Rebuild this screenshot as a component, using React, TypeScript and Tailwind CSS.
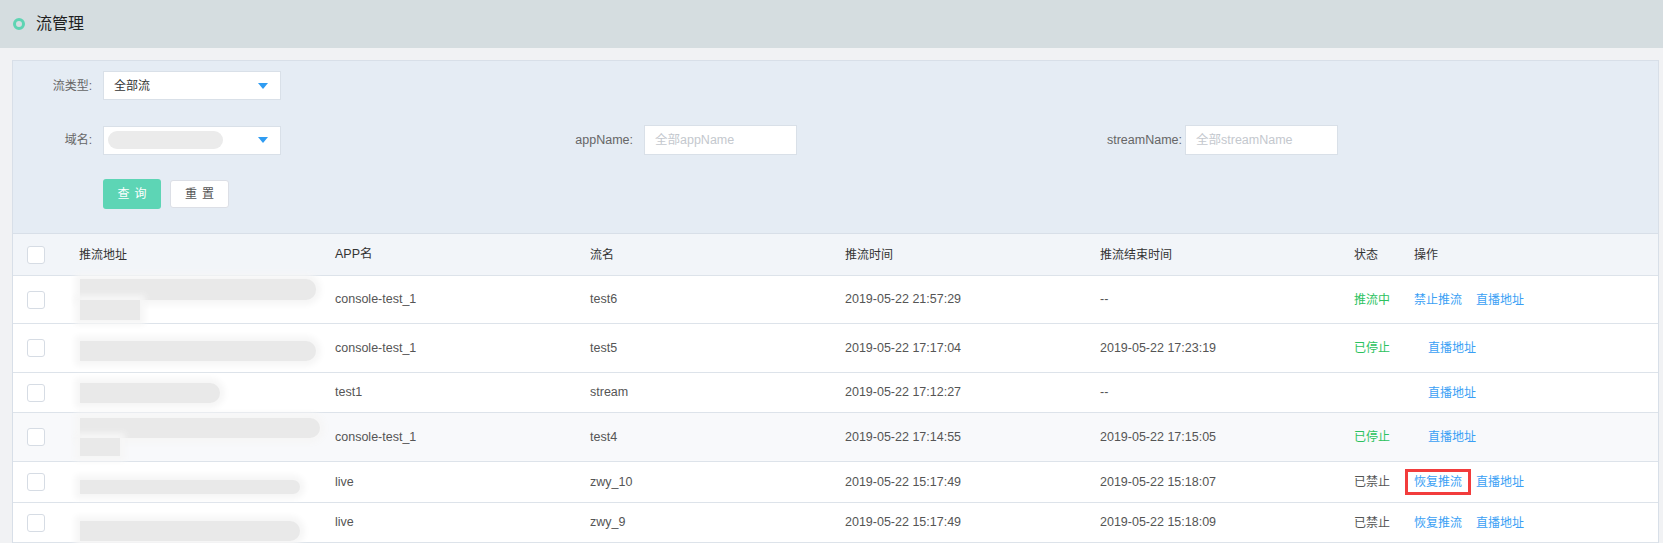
import React from 'react';

type Bar = { w: number; h: number };
type Row = {
  h: string;
  bars: Bar[];
  barsOffset?: string;
  app: string;
  stream: string;
  start: string;
  end: string;
  status: '推流中' | '已停止' | '已禁止' | '';
  action?: '禁止推流' | '恢复推流';
  marked?: boolean;
  hover?: boolean;
};

const rows: Row[] = [
  { h: 'h-[48px]', bars: [{ w: 236, h: 21 }, { w: 60, h: 20 }], app: 'console-test_1', stream: 'test6', start: '2019-05-22 21:57:29', end: '--', status: '推流中', action: '禁止推流' },
  { h: 'h-[49px]', bars: [{ w: 236, h: 20 }], barsOffset: 'mt-[5px]', app: 'console-test_1', stream: 'test5', start: '2019-05-22 17:17:04', end: '2019-05-22 17:23:19', status: '已停止' },
  { h: 'h-[40px]', bars: [{ w: 140, h: 20 }], app: 'test1', stream: 'stream', start: '2019-05-22 17:12:27', end: '--', status: '' },
  { h: 'h-[49px]', bars: [{ w: 240, h: 20 }, { w: 40, h: 18 }], app: 'console-test_1', stream: 'test4', start: '2019-05-22 17:14:55', end: '2019-05-22 17:15:05', status: '已停止', hover: true },
  { h: 'h-[41px]', bars: [{ w: 220, h: 14 }], barsOffset: 'mt-[10px]', app: 'live', stream: 'zwy_10', start: '2019-05-22 15:17:49', end: '2019-05-22 15:18:07', status: '已禁止', action: '恢复推流', marked: true },
  { h: 'h-[40px]', bars: [{ w: 220, h: 20 }], barsOffset: 'mt-[16px]', app: 'live', stream: 'zwy_9', start: '2019-05-22 15:17:49', end: '2019-05-22 15:18:09', status: '已禁止', action: '恢复推流' },
];

const cols = 'grid grid-cols-[54px_256px_255px_255px_255px_254px_60px_1fr]';

function Checkbox() {
  return <span className="block w-[18px] h-[18px] rounded-[3px] border border-[#d6dce4] bg-white" />;
}

function Caret() {
  return <span className="w-0 h-0 border-l-[5px] border-r-[5px] border-t-[6px] border-l-transparent border-r-transparent border-t-[#2f9cf2]" />;
}

function StatusText({ status }: { status: Row['status'] }) {
  if (status === '推流中' || status === '已停止') return <span className="text-[#2cc25e]">{status}</span>;
  return <span className="text-[#555]">{status}</span>;
}

export default function App() {
  return (
    <div className="min-h-screen bg-[#f1f2f4] text-[12.5px] text-[#555]" style={{ fontFamily: '"Liberation Sans", "Noto Sans CJK SC", sans-serif' }}>
      <div className="h-[48px] bg-[#d5dde0] flex items-center pl-[13px]">
        <span className="w-[12px] h-[12px] rounded-full border-[3px] border-[#5ed4b3]" />
        <span className="ml-[11px] text-[16px] text-[#1f1f1f]">流管理</span>
      </div>

      <div className="ml-[12px] mr-[4px] mt-[12px] border border-[#d8dfe8] border-b-0">
        <div className="bg-[#e5ecf4] pt-[10px] pb-[24px] border-b border-[#d8dfe8]">
          <div className="flex items-center h-[29px]">
            <span className="w-[90px] pr-[11px] text-right text-[12px] text-[#666]">流类型:</span>
            <div className="w-[178px] h-[29px] bg-white border border-[#d9e0e8] flex items-center justify-between pl-[10px] pr-[12px] text-[12px] text-[#333]">
              <span>全部流</span>
              <Caret />
            </div>
          </div>

          <div className="grid grid-cols-[541px_541px_1fr] mt-[25px] h-[29px]">
            <div className="flex items-center">
              <span className="w-[90px] pr-[11px] text-right text-[12px] text-[#666]">域名:</span>
              <div className="w-[178px] h-[29px] bg-white border border-[#d9e0e8] flex items-center justify-between pl-[4px] pr-[12px]">
                <span className="w-[115px] h-[18px] rounded-full bg-[#ebebeb] blur-[0.6px]" />
                <Caret />
              </div>
            </div>
            <div className="flex items-center">
              <span className="w-[90px] pr-[11px] flex justify-end whitespace-nowrap text-[#666]">appName:</span>
              <div className="w-[153px] h-[30px] bg-white border border-[#d9e0e8] flex items-center pl-[10px] text-[#c4c8ce]">全部appName</div>
            </div>
            <div className="flex items-center">
              <span className="w-[90px] pr-[3px] flex justify-end whitespace-nowrap text-[#666]">streamName:</span>
              <div className="w-[153px] h-[30px] bg-white border border-[#d9e0e8] flex items-center pl-[10px] text-[#c4c8ce]">全部streamName</div>
            </div>
          </div>

          <div className="flex items-center mt-[25px] ml-[90px] gap-[9px] h-[30px] text-[12px]">
            <button className="w-[58px] h-[30px] rounded-[3px] bg-[#5dd5b5] text-white tracking-[5px] pl-[5px]">查询</button>
            <button className="w-[59px] h-[28px] rounded-[3px] bg-white border border-[#dcdfe6] text-[#555] tracking-[5px] pl-[5px]">重置</button>
          </div>
        </div>

        <div className={`${cols} h-[42px] items-center bg-[#f2f5f9] border-b border-[#dde3ea] text-[12px] text-[#333]`}>
          <div className="pl-[14px]"><Checkbox /></div>
          <div className="pl-[12px]">推流地址</div>
          <div className="pl-[12px] text-[12.5px]">APP名</div>
          <div className="pl-[12px]">流名</div>
          <div className="pl-[12px]">推流时间</div>
          <div className="pl-[12px]">推流结束时间</div>
          <div className="pl-[12px]">状态</div>
          <div className="pl-[12px]">操作</div>
        </div>

        {rows.map((r, i) => (
          <div key={i} className={`${cols} ${r.h} items-center border-b border-[#dde3ea] ${r.hover ? 'bg-[#f8f9fb]' : 'bg-white'}`}>
            <div className="pl-[14px]"><Checkbox /></div>
            <div className={`pl-[13px] flex flex-col ${r.barsOffset ?? ''}`}>
              {r.bars.map((b, j) => (
                <span
                  key={j}
                  className={`block bg-[#e9e9e9] shadow-[0_0_6px_5px_#f6f6f6] ${j === 0 ? 'rounded-r-[10px]' : ''}`}
                  style={{ width: b.w, height: b.h }}
                />
              ))}
            </div>
            <div className="pl-[12px]">{r.app}</div>
            <div className="pl-[12px]">{r.stream}</div>
            <div className="pl-[12px]">{r.start}</div>
            <div className="pl-[12px]">{r.end}</div>
            <div className="pl-[12px] text-[12px]"><StatusText status={r.status} /></div>
            <div className="pl-[12px] flex items-center whitespace-nowrap text-[12px] text-[#3a9ff5]">
              {r.action ? (
                <span className="relative">
                  {r.action}
                  {r.marked && <span className="absolute -left-[9px] -right-[9px] -top-[4px] -bottom-[4px] border-[3px] border-[#f23c3c]" />}
                </span>
              ) : null}
              <span className="ml-[14px]">直播地址</span>
            </div>
          </div>
        ))}
      </div>
    </div>
  );
}
